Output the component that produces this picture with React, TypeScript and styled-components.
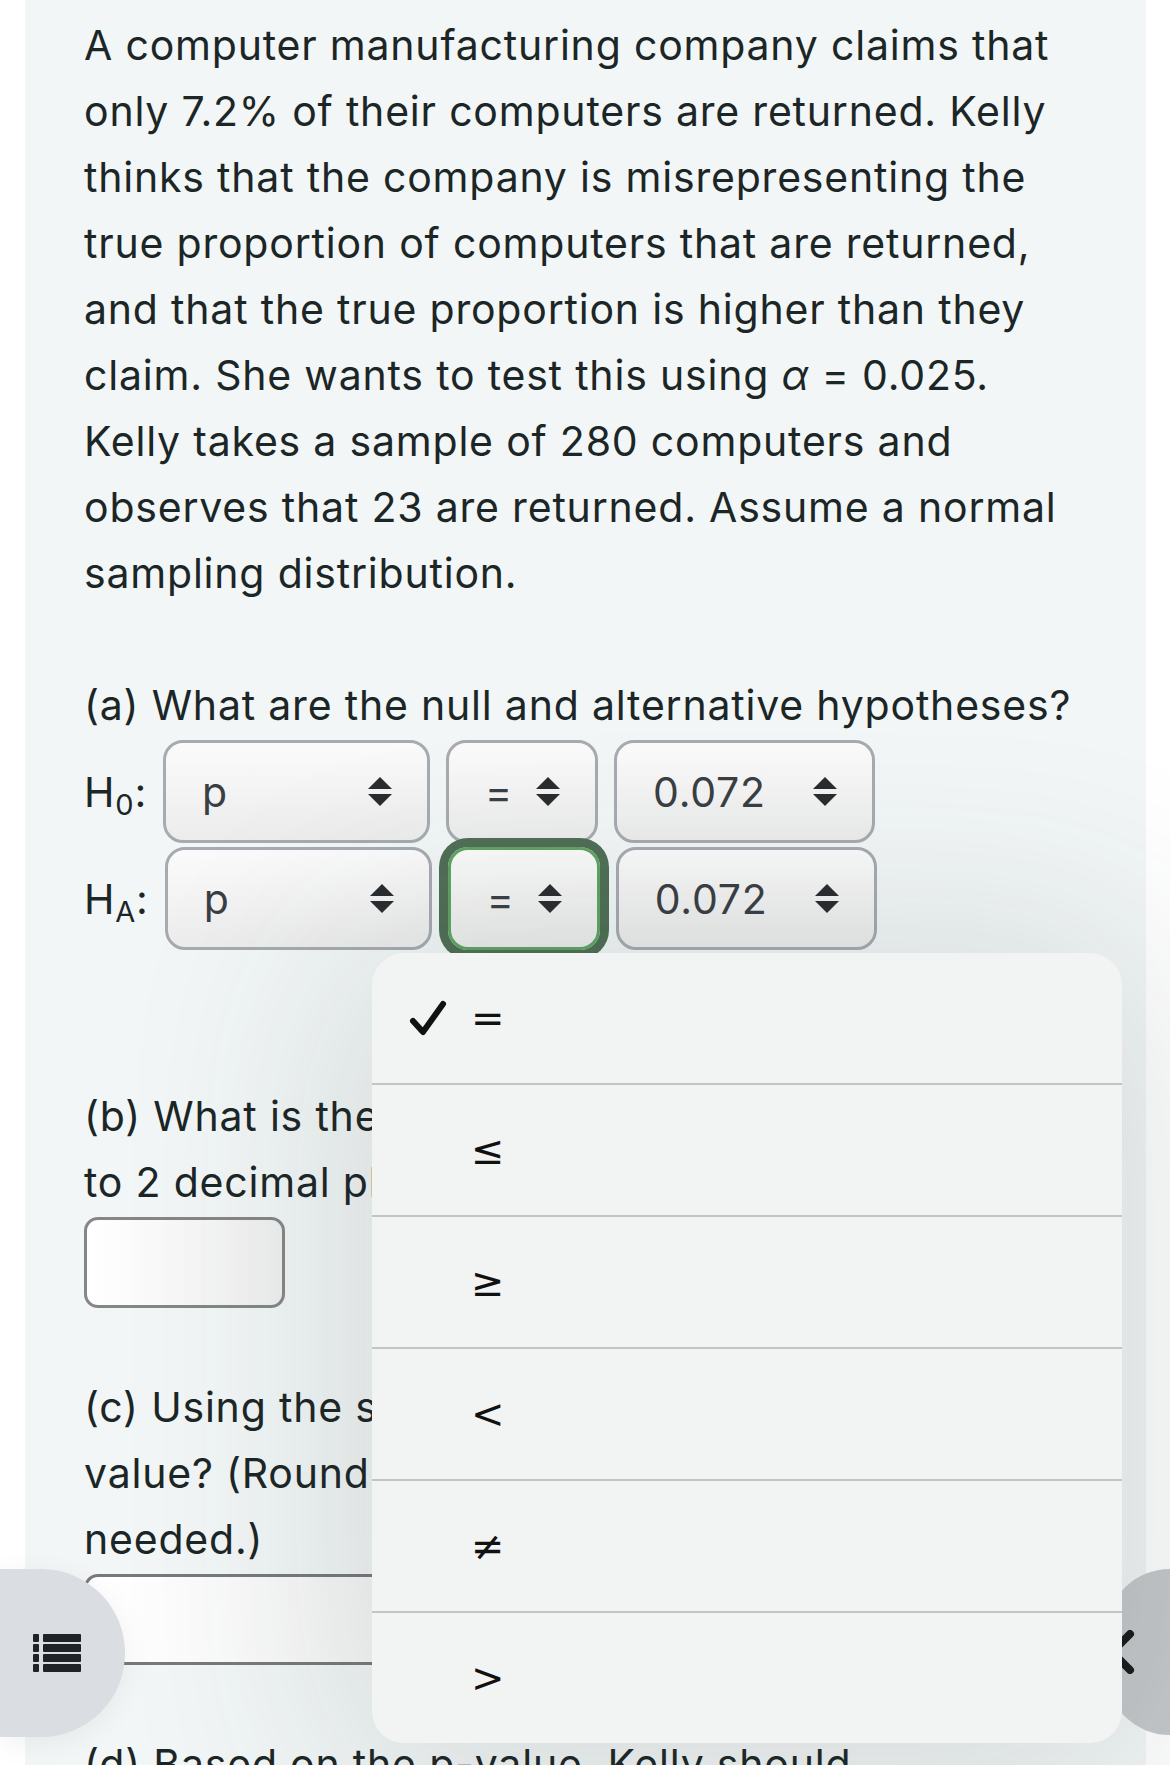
import React from 'react'
import styled, { createGlobalStyle, css } from 'styled-components'

const GlobalStyle = createGlobalStyle`
  html, body {
    margin: 0;
    padding: 0;
    background: #ffffff;
    overflow: hidden;
  }
  body {
    font-family: Inter, "Noto Sans", "Liberation Sans", sans-serif;
  }
`

const OPTIONS = ['=', '≤', '≥', '<', '≠', '>']

const Updown = () => (
  <svg width="24" height="30" viewBox="0 0 24 30">
    <path d="M12 0 L24 12 L0 12 Z" fill="#2a2d30" />
    <path d="M0 17 L24 17 L12 29 Z" fill="#2a2d30" />
  </svg>
)

const Check = () => (
  <svg width="38" height="36" viewBox="0 0 38 36">
    <path
      d="M4 21 L14 32 L34 4"
      fill="none"
      stroke="#111"
      strokeWidth="6"
      strokeLinecap="round"
      strokeLinejoin="round"
    />
  </svg>
)

const ListIcon = () => (
  <svg width="48" height="38" viewBox="0 0 48 38">
    {[0, 10, 20, 30].map(y => (
      <g key={y} fill="#1f2226">
        <rect x="0" y={y} width="6" height="8" rx="1" />
        <rect x="10" y={y} width="38" height="8" rx="1" />
      </g>
    ))}
  </svg>
)

const Chevron = () => (
  <svg width="30" height="44" viewBox="0 0 30 44">
    <path
      d="M24 4 L6 22 L24 40"
      fill="none"
      stroke="#1a1a1a"
      strokeWidth="8"
      strokeLinecap="round"
      strokeLinejoin="round"
    />
  </svg>
)

const App = () => {
  return (
    <>
      <GlobalStyle />
      <Page>
        <Panel>
          <Para>
            A computer manufacturing company claims that
            <br />
            only 7.2% of their computers are returned. Kelly
            <br />
            thinks that the company is misrepresenting the
            <br />
            true proportion of computers that are returned,
            <br />
            and that the true proportion is higher than they
            <br />
            claim. She wants to test this using <Alpha>α</Alpha> = 0.025.
            <br />
            Kelly takes a sample of 280 computers and
            <br />
            observes that 23 are returned. Assume a normal
            <br />
            sampling distribution.
          </Para>

          <Section>
            <Para>(a) What are the null and alternative hypotheses?</Para>
            <HypRow>
              <HypLabel>
                H<Sub>0</Sub>:
              </HypLabel>
              <Select $width={267}>
                <span>p</span>
                <Updown />
              </Select>
              <Select $width={152}>
                <span>=</span>
                <Updown />
              </Select>
              <Select $width={261}>
                <span>0.072</span>
                <Updown />
              </Select>
            </HypRow>
            <HypRow>
              <HypLabel>
                H<Sub>A</Sub>:
              </HypLabel>
              <Select $width={267}>
                <span>p</span>
                <Updown />
              </Select>
              <Select $width={152} $focused>
                <span>=</span>
                <Updown />
              </Select>
              <Select $width={261}>
                <span>0.072</span>
                <Updown />
              </Select>
            </HypRow>
          </Section>

          <Section $gap={133}>
            <Para>
              (b) What is the test statistic? (Round
              <br />
              to 2 decimal places.)
            </Para>
            <AnswerBox $width={201} />
          </Section>

          <Section>
            <Para>
              (c) Using the sample data, what is the p-
              <br />
              value? (Round to 4 decimal places if
              <br />
              needed.)
            </Para>
            <AnswerBox $width={560} $darkTop />
          </Section>

          <Section>
            <Para>(d) Based on the p-value, Kelly should</Para>
          </Section>
        </Panel>

        <Menu>
          {OPTIONS.map((opt, i) => (
            <MenuItem key={opt} $last={i === OPTIONS.length - 1}>
              <CheckSlot>{i === 0 && <Check />}</CheckSlot>
              <Symbol>{opt}</Symbol>
            </MenuItem>
          ))}
        </Menu>

        <LeftPill>
          <ListIcon />
        </LeftPill>
        <RightPill>
          <Chevron />
        </RightPill>
      </Page>
    </>
  )
}

export default App

const Page = styled.div`
  position: relative;
  width: 1170px;
  height: 1765px;
  overflow: hidden;
  display: flex;
  padding-left: 25px;
  box-sizing: border-box;
  background: #ffffff;
`

const Panel = styled.div`
  width: 1121px;
  flex: none;
  box-sizing: border-box;
  padding: 12px 0 0 59px;
  background: #f2f6f7;
  color: #1c2626;
  letter-spacing: 0.8px;
`

const Para = styled.p`
  margin: 0;
  font-size: 41px;
  line-height: 66px;
  white-space: nowrap;
`

const Alpha = styled.span`
  font-style: italic;
`

const Section = styled.div<{ $gap?: number }>`
  margin-top: ${p => p.$gap ?? 66}px;
`

const HypRow = styled.div`
  display: flex;
  align-items: center;
  gap: 16px;
  margin-top: 2px;
  & + & {
    margin-top: 4px;
  }
`

const HypLabel = styled.span`
  font-size: 41px;
  line-height: 66px;
  color: #1c2626;
`

const Sub = styled.sub`
  font-size: 29px;
  vertical-align: -8px;
  line-height: 0;
`

const Select = styled.div<{ $width: number; $focused?: boolean }>`
  width: ${p => p.$width}px;
  height: 103px;
  box-sizing: border-box;
  display: flex;
  align-items: center;
  justify-content: space-between;
  padding: 0 35px 0 36px;
  border: 3px solid #a7abb1;
  border-radius: 20px;
  background: linear-gradient(180deg, #fbfbfb 0%, #ececec 100%);
  font-size: 41px;
  color: #3a3f44;

  ${p =>
    p.$focused &&
    css`
      border-color: #5fa463;
      box-shadow: 0 0 0 9px #4f6f55;
    `}
`

const AnswerBox = styled.div<{ $width: number; $darkTop?: boolean }>`
  width: ${p => p.$width}px;
  height: 91px;
  margin-top: 2px;
  box-sizing: border-box;
  border: 3px solid #868688;
  border-radius: 14px;
  background: linear-gradient(90deg, #ffffff 0%, #f0f0f0 100%);
  ${p =>
    p.$darkTop &&
    css`
      border-color: #79797b;
    `}
`

const Menu = styled.div`
  position: absolute;
  left: 372px;
  top: 953px;
  width: 750px;
  height: 790px;
  border-radius: 32px;
  background: #f2f3f3;
  box-shadow: 0 20px 220px 40px rgba(40, 60, 60, 0.14);
  overflow: hidden;
  z-index: 3;
  display: flex;
  flex-direction: column;
`

const MenuItem = styled.div<{ $last?: boolean }>`
  flex: 1;
  display: flex;
  align-items: center;
  padding-left: 37px;
  border-bottom: ${p => (p.$last ? 'none' : '2px solid #c3c4c5')};
`

const CheckSlot = styled.div`
  width: 62px;
  display: flex;
  align-items: center;
`

const Symbol = styled.span`
  font-family: "DejaVu Sans", Inter, sans-serif;
  font-size: 40px;
  color: #111111;
  line-height: 1;
`

const LeftPill = styled.div`
  position: absolute;
  left: 0;
  top: 1569px;
  width: 125px;
  height: 168px;
  border-radius: 0 84px 84px 0;
  background: #dadde1;
  box-shadow: 0 6px 30px rgba(0, 0, 0, 0.06);
  display: flex;
  align-items: center;
  padding-left: 33px;
  box-sizing: border-box;
  z-index: 2;
`

const RightPill = styled.div`
  position: absolute;
  right: 0;
  top: 1569px;
  width: 64px;
  height: 166px;
  border-radius: 84px 0 0 84px;
  background: #c6c9cc;
  display: flex;
  align-items: center;
  padding-left: 0;
  box-sizing: border-box;
  z-index: 2;
`
